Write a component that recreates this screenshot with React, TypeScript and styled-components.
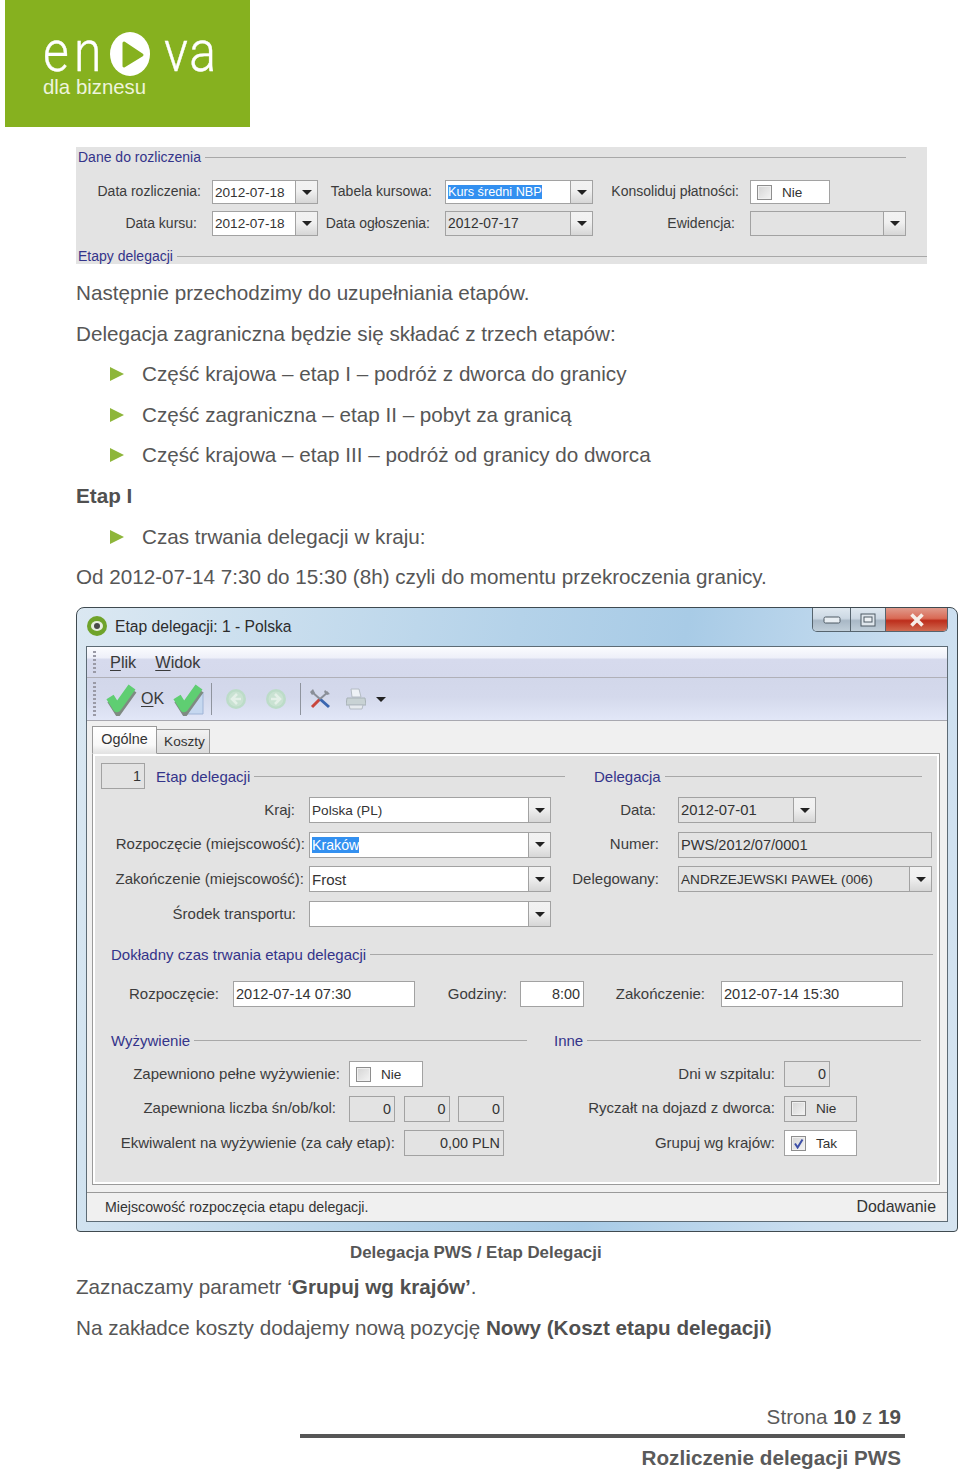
import React from "react";
import styled, { createGlobalStyle } from "styled-components";

const Global = createGlobalStyle`
  html, body { margin: 0; padding: 0; background: #fff; }
  body { font-family: "Liberation Sans", Arial, sans-serif; color: #565656; }
`;

const Page = styled.div`
  width: 960px;
  height: 1471px;
  overflow: hidden;
  position: relative;
`;

/* ---------- logo ---------- */
const Logo = styled.div`
  margin-left: 5px;
  width: 245px;
  height: 127px;
  background: #86b11f;
  display: flex;
  flex-direction: column;
  padding: 30px 0 0 38px;
  box-sizing: border-box;
  color: #fff;
`;
const Wordmark = styled.div`
  display: flex;
  align-items: center;
  height: 48px;
`;
const LogoLetters = styled.span<{ $w: number; $track: number; $offset?: number }>`
  font-family: Roboto, sans-serif;
  font-weight: 300;
  font-size: 58px;
  line-height: 48px;
  width: ${(p) => p.$w}px;
  margin-left: ${(p) => p.$offset ?? 0}px;
  letter-spacing: ${(p) => p.$track}px;
  -webkit-text-stroke: 0.4px #fff;
  transform: scaleX(0.86);
  transform-origin: left center;
  white-space: nowrap;
  position: relative;
  top: -3px;
`;
const LogoSub = styled.div`
  margin-top: -2px;
  font-size: 20.4px;
  line-height: 22px;
  color: #eef4dc;
`;

/* ---------- shared form parts ---------- */
const Legend = styled.div<{ $left?: number; $right?: number }>`
  display: flex;
  align-items: center;
  height: 20px;
  padding-left: ${(p) => p.$left ?? 0}px;
  padding-right: ${(p) => p.$right ?? 0}px;
  color: #34348a;
  white-space: nowrap;
  &::after {
    content: "";
    flex: 1;
    height: 1px;
    margin-left: 4px;
    background: #a8a8a8;
  }
`;
const Label = styled.div<{ $w?: number; $inset: number }>`
  ${(p) => (p.$w ? `width: ${p.$w}px; flex: none;` : "")}
  box-sizing: border-box;
  padding-right: ${(p) => p.$inset}px;
  padding-bottom: 2px;
  text-align: right;
  color: #3c3c3c;
  white-space: nowrap;
  align-self: center;
`;
const Combo = styled.div<{ $w?: number; $grey?: boolean; $size: number }>`
  ${(p) => (p.$w ? `width: ${p.$w}px; flex: none;` : "")}
  box-sizing: border-box;
  height: 100%;
  display: flex;
  align-items: center;
  border: 1px solid #a2a2a2;
  background: ${(p) => (p.$grey ? "#e3e3e3" : "#fff")};
  font-size: ${(p) => p.$size}px;
  color: #333;
  white-space: nowrap;
`;
const ComboText = styled.div`
  flex: 1;
  padding-left: 2px;
  overflow: hidden;
`;
const ComboButton = styled.div`
  width: 22px;
  flex: none;
  height: 100%;
  box-sizing: border-box;
  border-left: 1px solid #a2a2a2;
  background: linear-gradient(#f2f2f2, #f0f0f0 45%, #d6d6d6);
  display: flex;
  align-items: center;
  justify-content: center;
  &::after {
    content: "";
    border-style: solid;
    border-width: 5px 5px 0 5px;
    border-color: #222 transparent transparent transparent;
  }
`;
const Selected = styled.span`
  background: #3390f0;
  color: #fff;
`;
const ValueBox = styled.div<{ $w: number; $white?: boolean }>`
  width: ${(p) => p.$w}px;
  flex: none;
  box-sizing: border-box;
  height: 100%;
  border: 1px solid #a2a2a2;
  background: ${(p) => (p.$white ? "#fff" : "#e3e3e3")};
  display: flex;
  align-items: center;
  justify-content: flex-end;
  padding-right: 3px;
  font-size: 14.4px;
  color: #333;
`;
const CheckField = styled.div<{ $w: number; $grey?: boolean }>`
  width: ${(p) => p.$w}px;
  flex: none;
  box-sizing: border-box;
  height: 100%;
  border: 1px solid #a2a2a2;
  background: ${(p) => (p.$grey ? "#e3e3e3" : "#fff")};
  display: flex;
  align-items: center;
  padding-left: 6px;
  gap: 10px;
  font-size: 13.6px;
  color: #333;
`;
const CheckBox = styled.span`
  width: 15px;
  height: 15px;
  box-sizing: border-box;
  border: 1px solid #8e8e8e;
  background: linear-gradient(135deg, #d4d4d4, #f4f4f4);
  box-shadow: inset 0 0 0 1px #f0f0f0;
  display: flex;
  align-items: center;
  justify-content: center;
`;

/* ---------- top cropped form ---------- */
const TopForm = styled.section`
  margin: 20px 0 0 76px;
  width: 851px;
  height: 117px;
  background: #e3e3e3;
  overflow: hidden;
  font-size: 14px;
`;
const TopGrid = styled.div`
  margin-top: 13px;
  display: grid;
  grid-template-columns: 136px 106px 127px 148px 157px 156px;
  grid-template-rows: 24px 25px;
  row-gap: 7px;
  margin-bottom: 10px;
`;

/* ---------- document text ---------- */
const Copy = styled.div`
  margin: 17px 0 0 76px;
  display: flex;
  flex-direction: column;
  row-gap: 16.6px;
  font-size: 20.66px;
  line-height: 24px;
  color: #565656;
`;
const Line = styled.div`
  white-space: nowrap;
`;
const Bullet = styled.div`
  display: flex;
  align-items: center;
  padding-left: 34px;
  white-space: nowrap;
  &::before {
    content: "";
    flex: none;
    margin-right: 18px;
    border-style: solid;
    border-width: 7.5px 0 7.5px 14px;
    border-color: transparent transparent transparent #8eb63a;
  }
`;
const Strong = styled.b`
  font-weight: 700;
  color: #505050;
`;

/* ---------- window ---------- */
const Window = styled.section`
  margin: 18px 0 0 76px;
  width: 882px;
  height: 625px;
  box-sizing: border-box;
  border: 1px solid #3f4a50;
  border-radius: 8px 8px 4px 4px;
  padding: 0 9px 9px;
  background: linear-gradient(100deg, #dbe8f2 0%, #b4d2e9 45%, #a8cbe6 62%, #cadef0 85%, #d6e4f0 100%);
  display: flex;
  flex-direction: column;
`;
const TitleBar = styled.div`
  height: 38px;
  flex: none;
  display: flex;
  align-items: flex-start;
`;
const AppIcon = styled.svg`
  margin: 8px 8px 0 1px;
  flex: none;
`;
const Title = styled.div`
  flex: 1;
  margin-top: 8px;
  font-size: 15.65px;
  line-height: 21px;
  color: #2c2c2c;
`;
const WinButtons = styled.div`
  display: flex;
  height: 24px;
  border: 1px solid #56646e;
  border-top: none;
  border-radius: 0 0 5px 5px;
  overflow: hidden;
  box-sizing: border-box;
`;
const WinButton = styled.div<{ $w: number; $close?: boolean }>`
  width: ${(p) => p.$w}px;
  box-sizing: border-box;
  display: flex;
  align-items: center;
  justify-content: center;
  border-right: ${(p) => (p.$close ? "none" : "1px solid #56646e")};
  background: ${(p) =>
    p.$close
      ? "linear-gradient(#e09a8c, #d96a55 45%, #bd2e1c 55%, #d06a50)"
      : "linear-gradient(#dfe8f0, #ccd8e3 45%, #a9b8c6 55%, #c0ced9)"};
`;
const Client = styled.div`
  flex: 1;
  display: flex;
  flex-direction: column;
  border: 1px solid #5d6b75;
  background: #f0f0f0;
  min-height: 0;
`;
const MenuBar = styled.div`
  height: 31px;
  flex: none;
  box-sizing: border-box;
  display: flex;
  align-items: center;
  gap: 19px;
  padding-left: 23px;
  position: relative;
  border-bottom: 1px solid #b0b0b8;
  background: linear-gradient(#fbfcfe, #eef0f9 35%, #d6daed 42%, #d5d9ec);
  font-size: 16.3px;
  color: #3a3a3a;
`;
const Key = styled.span`
  text-decoration: underline;
  text-underline-offset: 2px;
  text-decoration-thickness: 1px;
`;
const Gripper = styled.span`
  position: absolute;
  left: 6px;
  top: 4px;
  bottom: 4px;
  width: 3px;
  background: repeating-linear-gradient(#9a9aa6 0 2px, transparent 2px 4px);
`;
const ToolBar = styled.div`
  height: 43px;
  flex: none;
  box-sizing: border-box;
  display: flex;
  align-items: center;
  padding-left: 18px;
  position: relative;
  border-bottom: 1px solid #a8a8b0;
  background: linear-gradient(#d2d7ea, #d4d9ec 45%, #e2e7f7);
  font-size: 16px;
  color: #3a3a3a;
`;
const ToolIcon = styled.svg<{ $gap?: number }>`
  flex: none;
  margin-left: ${(p) => p.$gap ?? 0}px;
`;
const ToolSep = styled.span<{ $gap: number }>`
  width: 1px;
  height: 32px;
  flex: none;
  margin-left: ${(p) => p.$gap}px;
  background: #8f949e;
`;
const ToolText = styled.span`
  margin-left: 4px;
  width: 31px;
`;
const ToolCaret = styled.span`
  margin-left: 10px;
  border-style: solid;
  border-width: 5px 5px 0 5px;
  border-color: #222 transparent transparent transparent;
`;

const TabArea = styled.div`
  flex: 1;
  padding: 5px 7px 7px 5px;
  display: flex;
  flex-direction: column;
  min-height: 0;
`;
const TabStrip = styled.div`
  height: 28px;
  flex: none;
  display: flex;
  align-items: flex-end;
  position: relative;
  z-index: 1;
  margin-bottom: -1px;
`;
const Tab = styled.div<{ $active?: boolean; $w: number }>`
  width: ${(p) => p.$w}px;
  height: ${(p) => (p.$active ? 28 : 25)}px;
  box-sizing: border-box;
  padding: ${(p) => (p.$active ? "0 0 2px 0" : "0 0 0 3px")};
  border: 1px solid #9a9a9a;
  border-bottom: ${(p) => (p.$active ? "1px solid #e3e3e3" : "1px solid #9a9a9a")};
  border-left: ${(p) => (p.$active ? "1px solid #9a9a9a" : "none")};
  background: ${(p) => (p.$active ? "linear-gradient(#fff, #f8f8f8 70%, #e3e3e3)" : "linear-gradient(#f2f2f2, #dcdcdc)")};
  display: flex;
  align-items: center;
  justify-content: center;
  font-size: ${(p) => (p.$active ? 14.4 : 13.6)}px;
  color: #333;
`;
const TabPanel = styled.div`
  flex: 1;
  box-sizing: border-box;
  border: 1px solid #9a9a9a;
  box-shadow: inset 0 0 0 2px #fff;
  background: #e3e3e3;
  padding: 9px 0 0 8px;
  min-height: 0;
  font-size: 15px;
`;
const TopColumns = styled.div`
  display: flex;
`;
const LeftTop = styled.div`
  width: 464px;
  flex: none;
`;
const RightTop = styled.div`
  width: 367px;
  flex: none;
`;
const HeadRow = styled.div`
  display: flex;
  height: 26px;
  align-items: center;
`;
const HeadLegend = styled.div<{ $left: number }>`
  flex: 1;
  margin-left: ${(p) => p.$left}px;
`;
const RowStack = styled.div<{ $top: number; $gap: number }>`
  margin-top: ${(p) => p.$top}px;
  display: flex;
  flex-direction: column;
  row-gap: ${(p) => p.$gap}px;
`;
const FormRow = styled.div`
  display: flex;
  height: 26px;
`;
const BoxGroup = styled.div`
  display: flex;
  gap: 8.5px;
  height: 100%;
`;
const SectionLegend = styled.div<{ $top: number }>`
  margin-top: ${(p) => p.$top}px;
  margin-right: 6px;
`;
const BottomColumns = styled.div`
  margin-top: 23px;
  display: flex;
  gap: 3px;
`;
const LeftBottom = styled.div`
  width: 426px;
  flex: none;
`;
const RightBottom = styled.div`
  width: 391px;
  flex: none;
`;
const StatusBar = styled.div`
  height: 29px;
  flex: none;
  box-sizing: border-box;
  border-top: 1px solid #9a9a9a;
  background: #f0f0f0;
  display: flex;
  align-items: center;
  justify-content: space-between;
  padding: 0 11px 0 18px;
  font-size: 14.2px;
  color: #333;
`;
const StatusRight = styled.span`
  font-size: 15.9px;
`;

/* ---------- below the window ---------- */
const Caption = styled.div`
  margin: 11px 0 0 350px;
  font-size: 16.9px;
  line-height: 20px;
  font-weight: 700;
  color: #565656;
`;
const LowerCopy = styled(Copy)`
  margin-top: 12px;
`;
const Footer = styled.footer`
  margin-top: 65px;
`;
const FooterLine = styled.div`
  padding-right: 59px;
  text-align: right;
  font-size: 20.66px;
  line-height: 24px;
  color: #5a5a5a;
`;
const FooterBar = styled.div`
  margin: 5px 0 8px 300px;
  width: 605px;
  height: 4px;
  background: #565656;
`;
const FooterTitle = styled(FooterLine)`
  font-weight: 700;
`;

/* ---------- drawings ---------- */
const Tick = () => (
  <svg width="11" height="11" viewBox="0 0 11 11">
    <path d="M2 5.5 L4.6 9.5 L9.5 1.5" fill="none" stroke="#3d4fa8" strokeWidth="2" />
  </svg>
);
const Arrow = ({ back, gap }: { back?: boolean; gap: number }) => (
  <ToolIcon $gap={gap} width="20" height="20" viewBox="0 0 20 20">
    <circle cx="10" cy="10" r="10" fill="#bcdcc8" />
    <circle cx="10" cy="10" r="7.5" fill="#c9e2d2" />
    <path
      d={back ? "M11 5 L6 10 L11 15 M6 10 H15" : "M9 5 L14 10 L9 15 M14 10 H5"}
      fill="none"
      stroke="#e4f0e8"
      strokeWidth="2.6"
    />
  </ToolIcon>
);
const BigCheck = ({ doc, gap }: { doc?: boolean; gap: number }) => (
  <ToolIcon $gap={gap} width="32" height="33" viewBox="0 0 32 33">
    {doc && <path d="M31 9 V31 H12 Z" fill="#c6d8f0" stroke="#9fb4d6" strokeWidth="1" />}
    <path d="M6 17 L13 28 L28 7" fill="none" stroke="#7f8a82" strokeWidth="8.5" strokeLinejoin="miter" />
    <path d="M5 14 L12 25 L27 4" fill="none" stroke="#5fce72" strokeWidth="8.5" strokeLinejoin="round" />
  </ToolIcon>
);

const Field = ({ text, w, grey, selected, size }: { text?: string; w?: number; grey?: boolean; selected?: boolean; size: number }) => (
  <Combo $w={w} $grey={grey} $size={size}>
    <ComboText>{selected ? <Selected>{text}</Selected> : text}</ComboText>
    <ComboButton />
  </Combo>
);
const Plain = ({ text, w, white }: { text: string; w: number; white?: boolean }) => (
  <Combo $w={w} $grey={!white} $size={14.6}>
    <ComboText>{text}</ComboText>
  </Combo>
);
const Check = ({ w, grey, on, text }: { w: number; grey?: boolean; on?: boolean; text: string }) => (
  <CheckField $w={w} $grey={grey}>
    <CheckBox>{on && <Tick />}</CheckBox>
    {text}
  </CheckField>
);

export default function App() {
  return (
    <Page>
      <Global />
      <Logo>
        <Wordmark>
          <LogoLetters $w={67} $track={6}>en</LogoLetters>
          <svg width="40" height="44" viewBox="0 0 40 44" style={{ flex: "none" }}>
            <ellipse cx="20" cy="22" rx="20" ry="22" fill="#fff" />
            <path d="M14 11 L32 23 L14 34 Z" fill="#86b11f" stroke="#86b11f" strokeWidth="3" strokeLinejoin="round" />
          </svg>
          <LogoLetters $w={60} $track={2} $offset={14}>va</LogoLetters>
        </Wordmark>
        <LogoSub>dla biznesu</LogoSub>
      </Logo>

      <TopForm>
        <Legend $left={2} $right={21}>Dane do rozliczenia</Legend>
        <TopGrid>
          <Label $inset={11}>Data rozliczenia:</Label>
          <Field text="2012-07-18" size={13.6} />
          <Label $inset={13}>Tabela kursowa:</Label>
          <Field text="Kurs średni NBP" selected size={12.7} />
          <Label $inset={11}>Konsoliduj płatności:</Label>
          <Check w={80} text="Nie" />
          <Label $inset={15}>Data kursu:</Label>
          <Field text="2012-07-18" size={13.6} />
          <Label $inset={15}>Data ogłoszenia:</Label>
          <Field text="2012-07-17" grey size={13.8} />
          <Label $inset={15}>Ewidencja:</Label>
          <Field grey size={14} />
        </TopGrid>
        <Legend $left={2}>Etapy delegacji</Legend>
      </TopForm>

      <Copy>
        <Line>Następnie przechodzimy do uzupełniania etapów.</Line>
        <Line>Delegacja zagraniczna będzie się składać z trzech etapów:</Line>
        <Bullet>Część krajowa – etap I – podróż z dworca do granicy</Bullet>
        <Bullet>Część zagraniczna – etap II – pobyt za granicą</Bullet>
        <Bullet>Część krajowa – etap III – podróż od granicy do dworca</Bullet>
        <Line><Strong>Etap I</Strong></Line>
        <Bullet>Czas trwania delegacji w kraju:</Bullet>
        <Line>Od 2012-07-14 7:30 do 15:30 (8h) czyli do momentu przekroczenia granicy.</Line>
      </Copy>

      <Window>
        <TitleBar>
          <AppIcon width="20" height="20" viewBox="0 0 20 20">
            <circle cx="10" cy="10" r="10" fill="#6fa32a" />
            <ellipse cx="10" cy="10" rx="6" ry="5" fill="#e8eee0" />
            <circle cx="10" cy="10" r="3" fill="#4a4a4a" />
          </AppIcon>
          <Title>Etap delegacji: 1 - Polska</Title>
          <WinButtons>
            <WinButton $w={38}>
              <svg width="18" height="8" viewBox="0 0 18 8">
                <rect x="1" y="1" width="16" height="6" rx="1.5" fill="#e8eef3" stroke="#4e5a64" />
              </svg>
            </WinButton>
            <WinButton $w={35}>
              <svg width="16" height="14" viewBox="0 0 16 14">
                <rect x="1" y="1" width="14" height="12" fill="#dfe6ec" stroke="#4e5a64" />
                <rect x="4" y="4" width="8" height="5" fill="#eef2f5" stroke="#4e5a64" />
              </svg>
            </WinButton>
            <WinButton $w={61} $close>
              <svg width="16" height="14" viewBox="0 0 16 14">
                <path d="M2.5 1.5 L13.5 12.5 M13.5 1.5 L2.5 12.5" stroke="#f6eee8" strokeWidth="3.6" />
              </svg>
            </WinButton>
          </WinButtons>
        </TitleBar>
        <Client>
          <MenuBar>
            <Gripper />
            <span><Key>P</Key>lik</span>
            <span><Key>W</Key>idok</span>
          </MenuBar>
          <ToolBar>
            <Gripper />
            <BigCheck gap={0} />
            <ToolText><Key>O</Key>K</ToolText>
            <BigCheck doc gap={0} />
            <ToolSep $gap={7} />
            <Arrow back gap={14} />
            <Arrow gap={20} />
            <ToolSep $gap={14} />
            <ToolIcon $gap={8} width="22" height="20" viewBox="0 0 22 20">
              <path d="M11 10 L3 18" stroke="#c8453c" strokeWidth="3" />
              <path d="M11 10 L20 18" stroke="#3a66b0" strokeWidth="3" />
              <path d="M11 10 L19 3" stroke="#8a8f98" strokeWidth="2" />
              <path d="M11 10 L3 3" stroke="#8a8f98" strokeWidth="2" />
              <path d="M16 1 L21 5 L18 6 L15 3 Z" fill="#8a8f98" />
              <path d="M1 3 L4 0 L6 4 L3 6 Z" fill="#8a8f98" />
            </ToolIcon>
            <ToolIcon $gap={15} width="20" height="22" viewBox="0 0 20 22">
              <path d="M5 1 H13 L15 9 H6 Z" fill="#eef2f6" stroke="#b4bcc4" />
              <path d="M1 10 H19 L20 17 H0 Z" fill="#c8d2d4" stroke="#a8b2b6" />
              <path d="M3 17 H17 L16 21 H4 Z" fill="#e6eaee" stroke="#b4bcc4" />
            </ToolIcon>
            <ToolCaret />
          </ToolBar>
          <TabArea>
            <TabStrip>
              <Tab $active $w={65}>Ogólne</Tab>
              <Tab $w={53}>Koszty</Tab>
            </TabStrip>
            <TabPanel>
              <TopColumns>
                <LeftTop>
                  <HeadRow>
                    <ValueBox $w={44}>1</ValueBox>
                    <HeadLegend $left={11}><Legend>Etap delegacji</Legend></HeadLegend>
                  </HeadRow>
                  <RowStack $top={8} $gap={8.67}>
                    <FormRow><Label $w={208} $inset={14}>Kraj:</Label><Field w={242} size={13.6} text="Polska (PL)" /></FormRow>
                    <FormRow><Label $w={208} $inset={4}>Rozpoczęcie (miejscowość):</Label><Field w={242} size={14.2} text="Kraków" selected /></FormRow>
                    <FormRow><Label $w={208} $inset={5}>Zakończenie (miejscowość):</Label><Field w={242} size={15} text="Frost" /></FormRow>
                    <FormRow><Label $w={208} $inset={13}>Środek transportu:</Label><Field w={242} size={14} /></FormRow>
                  </RowStack>
                </LeftTop>
                <RightTop>
                  <HeadRow><HeadLegend $left={29}><Legend $right={10}>Delegacja</Legend></HeadLegend></HeadRow>
                  <RowStack $top={8} $gap={8.67}>
                    <FormRow><Label $w={113} $inset={22}>Data:</Label><Field w={138} size={14.8} text="2012-07-01" grey /></FormRow>
                    <FormRow><Label $w={113} $inset={19}>Numer:</Label><Plain w={254} text="PWS/2012/07/0001" /></FormRow>
                    <FormRow><Label $w={113} $inset={19}>Delegowany:</Label><Field w={254} size={13.6} text="ANDRZEJEWSKI PAWEŁ (006)" grey /></FormRow>
                  </RowStack>
                </RightTop>
              </TopColumns>
              <SectionLegend $top={17}><Legend $left={10}>Dokładny czas trwania etapu delegacji</Legend></SectionLegend>
              <RowStack $top={17} $gap={0}>
                <FormRow>
                  <Label $w={132} $inset={14}>Rozpoczęcie:</Label>
                  <Plain w={182} white text="2012-07-14 07:30" />
                  <Label $w={105} $inset={13}>Godziny:</Label>
                  <ValueBox $w={64} $white>8:00</ValueBox>
                  <Label $w={137} $inset={16}>Zakończenie:</Label>
                  <Plain w={182} white text="2012-07-14 15:30" />
                </FormRow>
              </RowStack>
              <BottomColumns>
                <LeftBottom>
                  <Legend $left={10}>Wyżywienie</Legend>
                  <RowStack $top={11} $gap={8.5}>
                    <FormRow><Label $w={248} $inset={9}>Zapewniono pełne wyżywienie:</Label><Check w={74} text="Nie" /></FormRow>
                    <FormRow>
                      <Label $w={248} $inset={13}>Zapewniona liczba śn/ob/kol:</Label>
                      <BoxGroup>
                        <ValueBox $w={46}>0</ValueBox>
                        <ValueBox $w={46}>0</ValueBox>
                        <ValueBox $w={46}>0</ValueBox>
                      </BoxGroup>
                    </FormRow>
                    <FormRow><Label $w={303} $inset={9}>Ekwiwalent na wyżywienie (za cały etap):</Label><ValueBox $w={100}>0,00 PLN</ValueBox></FormRow>
                  </RowStack>
                </LeftBottom>
                <RightBottom>
                  <Legend $left={24}>Inne</Legend>
                  <RowStack $top={11} $gap={8.5}>
                    <FormRow><Label $w={254} $inset={9}>Dni w szpitalu:</Label><ValueBox $w={46}>0</ValueBox></FormRow>
                    <FormRow><Label $w={254} $inset={9}>Ryczałt na dojazd z dworca:</Label><Check w={73} grey text="Nie" /></FormRow>
                    <FormRow><Label $w={254} $inset={9}>Grupuj wg krajów:</Label><Check w={73} on text="Tak" /></FormRow>
                  </RowStack>
                </RightBottom>
              </BottomColumns>
            </TabPanel>
          </TabArea>
          <StatusBar>
            <span>Miejscowość rozpoczęcia etapu delegacji.</span>
            <StatusRight>Dodawanie</StatusRight>
          </StatusBar>
        </Client>
      </Window>

      <Caption>Delegacja PWS / Etap Delegacji</Caption>
      <LowerCopy>
        <Line>Zaznaczamy parametr ‘<Strong>Grupuj wg krajów’</Strong>.</Line>
        <Line>Na zakładce koszty dodajemy nową pozycję <Strong>Nowy (Koszt etapu delegacji)</Strong></Line>
      </LowerCopy>
      <Footer>
        <FooterLine>Strona <Strong>10</Strong> z <Strong>19</Strong></FooterLine>
        <FooterBar />
        <FooterTitle>Rozliczenie delegacji PWS</FooterTitle>
      </Footer>
    </Page>
  );
}
